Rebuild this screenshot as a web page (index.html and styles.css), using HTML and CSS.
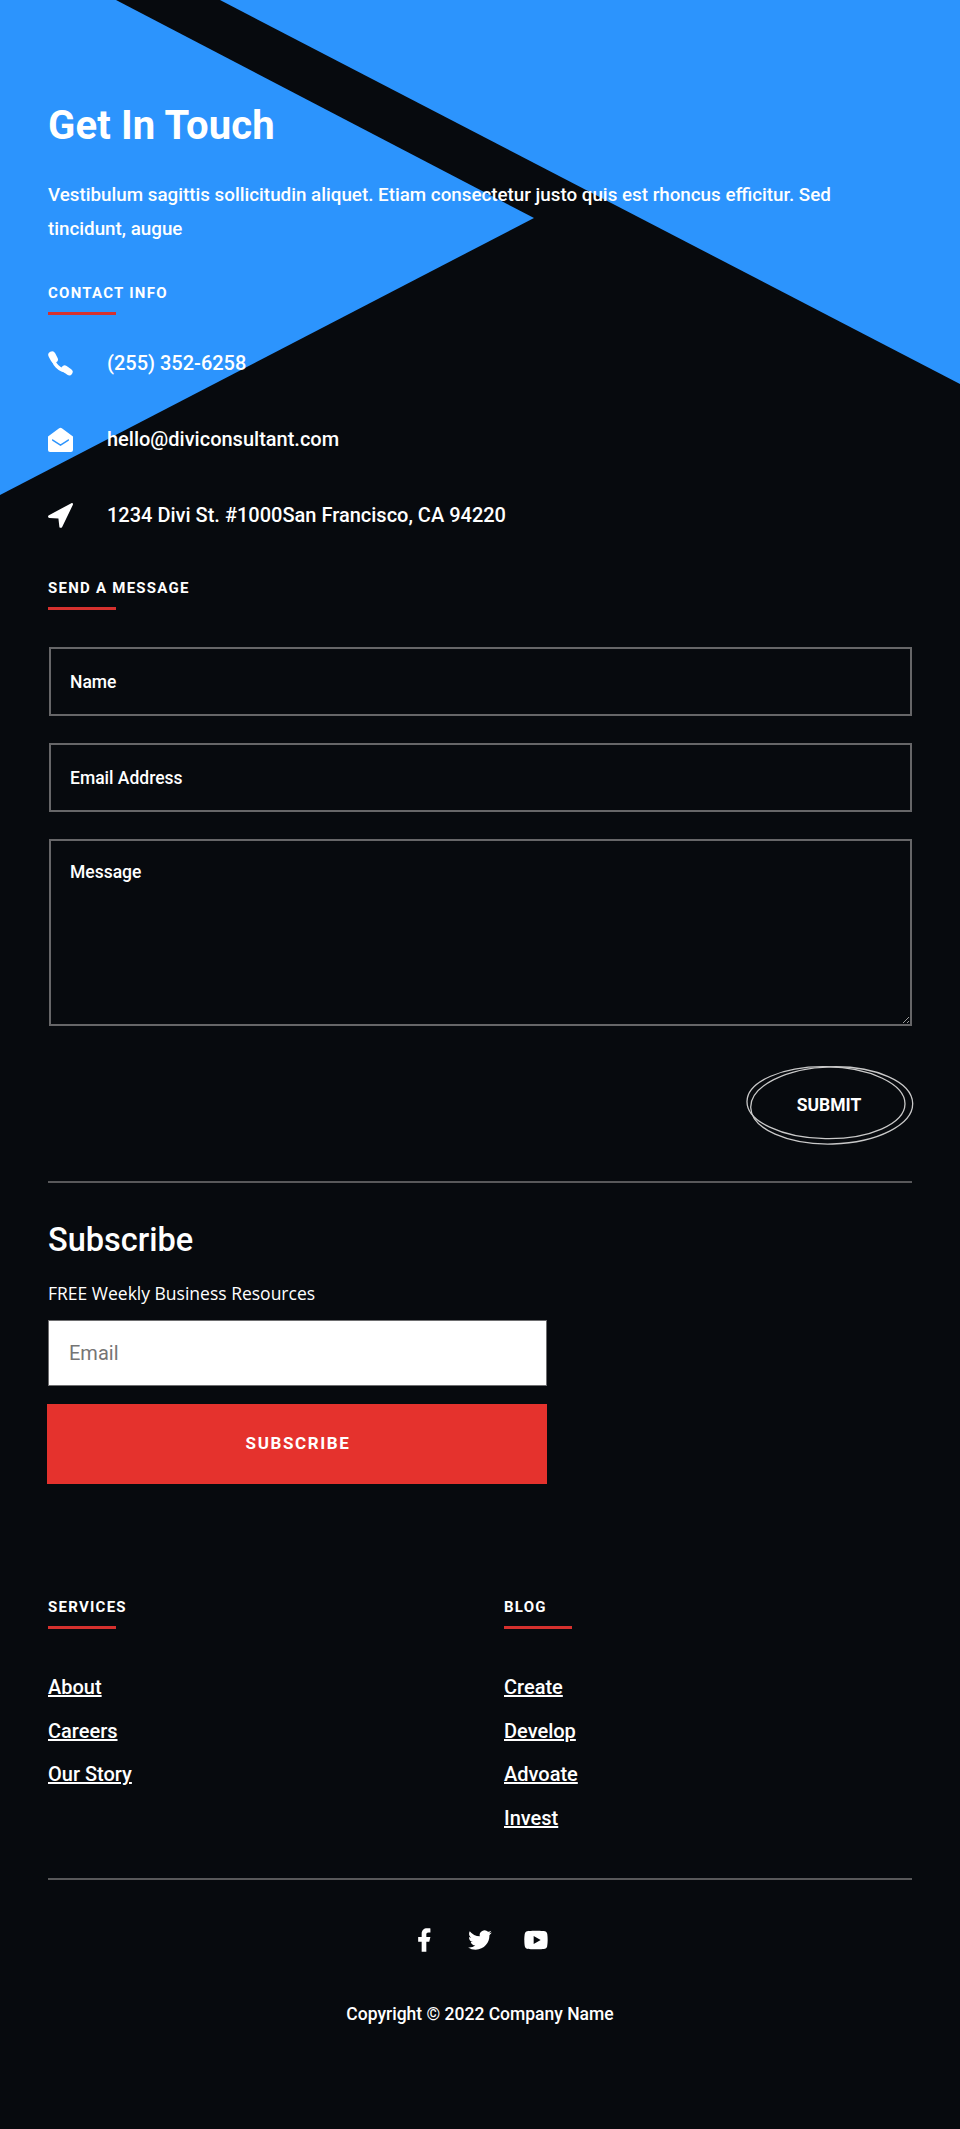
FILE: index.html
```html
<!DOCTYPE html>
<html lang="en">
<head>
    <meta charset="UTF-8">
    <meta name="viewport" content="width=device-width, initial-scale=1.0">
    <title>Get In Touch</title>
    <link rel="stylesheet" href="styles.css">
</head>
<body>
    <div class="page">
        <svg class="backdrop" viewBox="0 0 960 520" width="960" height="520" aria-hidden="true">
            <polygon points="0,0 116,0 534,218 0,495" fill="#2c94fd"/>
            <polygon points="220,0 960,0 960,384" fill="#2c94fd"/>
        </svg>

        <section class="contact">
            <h1>Get In Touch</h1>
            <p class="intro">Vestibulum sagittis sollicitudin aliquet. Etiam consectetur justo quis est rhoncus efficitur. Sed tincidunt, augue</p>

            <h4 class="label">Contact Info</h4>
            <div class="info-row">
                <svg class="info-icon" viewBox="0 0 24 24">
                    <path d="M4.5 4.5C4.5 12 10.5 19 19.5 19.5" fill="none" stroke="#fff" stroke-width="3.4"/>
                    <path d="M3.8 3.8L6 8" fill="none" stroke="#fff" stroke-width="7" stroke-linecap="round"/>
                    <path d="M16 17L20.4 20.2" fill="none" stroke="#fff" stroke-width="6.4" stroke-linecap="round"/>
                </svg>
                <span>(255) 352-6258</span>
            </div>
            <div class="info-row">
                <svg class="info-icon" viewBox="0 0 24 24">
                    <path d="M10.7 1.2a2.2 2.2 0 0 1 2.6 0L24 9v13a2 2 0 0 1-2 2H2a2 2 0 0 1-2-2V9z" fill="#fff"/>
                    <path d="M4.5 12.5L12 17.5L19.5 12.5" fill="none" stroke="#2c94fd" stroke-width="1.4" stroke-linecap="round" stroke-linejoin="round"/>
                </svg>
                <span>hello@diviconsultant.com</span>
            </div>
            <div class="info-row">
                <svg class="info-icon" viewBox="0 0 24 24">
                    <path d="M22.4.2c1-.4 1.9.5 1.5 1.5L13.6 23c-.6 1.3-2.5 1.1-2.7-.3L10 15 1.4 14.4C-.1 14.2-.5 12.4.9 11.7z" fill="#fff"/>
                </svg>
                <span>1234 Divi St. #1000San Francisco, CA 94220</span>
            </div>

            <h4 class="label label-message">Send A Message</h4>
            <form class="message-form">
                <input type="text" placeholder="Name">
                <input type="text" placeholder="Email Address">
                <textarea placeholder="Message"></textarea>
                <div class="form-actions">
                    <button type="button" class="submit">
                        <svg class="scribble" viewBox="0 0 166 80" aria-hidden="true">
                            <ellipse cx="80" cy="37.7" rx="79" ry="36" transform="rotate(1 80 37.7)"/>
                            <ellipse cx="85.7" cy="40.4" rx="81" ry="38.6" transform="rotate(-1.5 85.7 40.4)"/>
                        </svg>
                        SUBMIT
                    </button>
                </div>
            </form>
        </section>

        <section class="subscribe">
            <h2>Subscribe</h2>
            <p class="sub-note">FREE Weekly Business Resources</p>
            <div class="sub-form">
                <input type="email" placeholder="Email">
                <button type="button">SUBSCRIBE</button>
            </div>
        </section>

        <section class="links">
            <div>
                <h4 class="label">Services</h4>
                <ul>
                    <li><a href="#">About</a></li>
                    <li><a href="#">Careers</a></li>
                    <li><a href="#">Our Story</a></li>
                </ul>
            </div>
            <div>
                <h4 class="label">Blog</h4>
                <ul>
                    <li><a href="#">Create</a></li>
                    <li><a href="#">Develop</a></li>
                    <li><a href="#">Advoate</a></li>
                    <li><a href="#">Invest</a></li>
                </ul>
            </div>
        </section>

        <footer class="footer">
            <div class="social">
                <a href="#"><svg viewBox="0 0 24 24"><path d="M14 13.5h2.5l1-4H14v-2c0-1.03 0-2 2-2h1.5V2.14c-.326-.043-1.557-.14-2.857-.14C11.928 2 10 3.657 10 6.7v2.8H7v4h3V22h4v-8.5z"/></svg></a>
                <a href="#"><svg viewBox="0 0 24 24"><path d="M22.162 5.656a8.384 8.384 0 0 1-2.402.658A4.196 4.196 0 0 0 21.6 4c-.82.488-1.719.83-2.656 1.015a4.182 4.182 0 0 0-7.126 3.814 11.874 11.874 0 0 1-8.62-4.37 4.168 4.168 0 0 0-.566 2.103c0 1.45.738 2.731 1.86 3.481a4.168 4.168 0 0 1-1.894-.523v.052a4.185 4.185 0 0 0 3.355 4.101 4.21 4.21 0 0 1-1.89.072A4.185 4.185 0 0 0 7.97 16.65a8.394 8.394 0 0 1-6.191 1.732 11.83 11.83 0 0 0 6.41 1.88c7.693 0 11.9-6.373 11.9-11.9 0-.18-.005-.362-.013-.54a8.496 8.496 0 0 0 2.087-2.165z"/></svg></a>
                <a href="#"><svg viewBox="0 0 24 24"><path fill-rule="evenodd" d="M21.543 6.498C22 8.28 22 12 22 12s0 3.72-.457 5.502c-.254.985-.997 1.76-1.938 2.022C17.896 20 12 20 12 20s-5.893 0-7.605-.476c-.945-.266-1.687-1.04-1.938-2.022C2 15.72 2 12 2 12s0-3.72.457-5.502c.254-.985.997-1.76 1.938-2.022C6.107 4 12 4 12 4s5.896 0 7.605.476c.945.266 1.687 1.04 1.938 2.022zM10 15.5l6-3.5-6-3.5v7z"/></svg></a>
            </div>
            <p class="copyright">Copyright © 2022 Company Name</p>
        </footer>
    </div>
</body>
</html>
```

FILE: styles.css
```css
* {
    box-sizing: border-box;
}
body {
    margin: 0;
    background: #070a0e;
    color: #fff;
    font-family: Roboto, sans-serif;
    font-weight: 500;
}
.page {
    position: relative;
    width: 960px;
    height: 2129px;
    padding: 0 48px;
    overflow: hidden;
}
.backdrop {
    position: absolute;
    top: 0;
    left: 0;
}
section, footer {
    position: relative;
}
.contact {
    padding-top: 102px;
}
h1 {
    margin: 0 0 28px;
    font-size: 40px;
    line-height: 48px;
    font-weight: 700;
    letter-spacing: 0.15px;
}
.intro {
    margin: 0 0 39px;
    font-size: 18.8px;
    line-height: 34px;
}
.label {
    position: relative;
    margin: 0;
    height: 40px;
    font-size: 15px;
    line-height: 16px;
    font-weight: 700;
    letter-spacing: 1.25px;
    text-transform: uppercase;
}
.label::after {
    content: "";
    position: absolute;
    left: 0;
    top: 27px;
    width: 68px;
    height: 3px;
    background: #d6312e;
}
.info-row {
    display: flex;
    align-items: center;
    gap: 34px;
    height: 76px;
    font-size: 20px;
}
.info-icon {
    width: 25px;
    height: 25px;
    flex: none;
}
.label-message {
    margin-top: 27px;
}
.message-form {
    padding-top: 27px;
}
.message-form input, .message-form textarea {
    display: block;
    width: calc(100% - 1px);
    margin-left: 1px;
    padding: 0 19px;
    background: transparent;
    border: 2px solid #666668;
    border-radius: 0;
    color: #fff;
    font: 500 17.5px Roboto, sans-serif;
}
.message-form input {
    height: 69px;
    margin-bottom: 27px;
}
.message-form textarea {
    height: 187px;
    padding-top: 20px;
    line-height: 22px;
}
input::placeholder, textarea::placeholder {
    color: #fff;
    opacity: 1;
}
.form-actions {
    display: flex;
    justify-content: flex-end;
    margin-top: 39px;
}
.submit {
    position: relative;
    width: 166px;
    height: 80px;
    background: none;
    border: none;
    color: #fff;
    font: 700 17.5px Roboto, sans-serif;
    padding: 0;
}
.scribble {
    position: absolute;
    top: 0;
    left: 0;
    width: 166px;
    height: 80px;
    fill: none;
    stroke: #c9c9c9;
    stroke-width: 1.3;
    overflow: visible;
}
.subscribe {
    margin-top: 36px;
    padding-top: 37px;
    border-top: 2px solid #58585a;
}
h2 {
    margin: 0 0 20px;
    font-size: 32.5px;
    line-height: 40px;
    font-weight: 500;
}
.sub-note {
    margin: 0 0 14px;
    font-family: "Open Sans", sans-serif;
    font-size: 17.5px;
    line-height: 26px;
    font-weight: 400;
}
.sub-form input {
    display: block;
    width: 499px;
    height: 66px;
    margin: 0 0 18px;
    padding: 0 20px;
    background: #fff;
    border: 1px solid #6e6e70;
    border-radius: 0;
    font: 400 20px Roboto, sans-serif;
}
.sub-form input::placeholder {
    color: #757575;
}
.sub-form button {
    display: block;
    width: 500px;
    height: 80px;
    margin: 0 0 0 -1px;
    padding: 0 0 2px 2px;
    background: #e5322d;
    border: none;
    color: #fff;
    font: 700 17px Roboto, sans-serif;
    letter-spacing: 1.6px;
}
.links {
    display: grid;
    grid-template-columns: 456px 1fr;
    margin-top: 115px;
}
.links ul {
    list-style: none;
    margin: 0;
    padding: 27px 0 0;
}
.links li {
    height: 43.7px;
    font-size: 20px;
    line-height: 43.7px;
}
.links a {
    color: #fff;
}
.footer {
    margin-top: 37px;
    border-top: 2px solid #58585a;
    text-align: center;
}
.social {
    display: flex;
    justify-content: center;
    gap: 28px;
    padding-top: 46px;
}
.social a {
    display: block;
    height: 28px;
}
.social svg {
    display: block;
    width: 28px;
    height: 28px;
    fill: #fff;
}
.copyright {
    margin: 48px 0 0;
    font-size: 17.5px;
    line-height: 24px;
}
```
